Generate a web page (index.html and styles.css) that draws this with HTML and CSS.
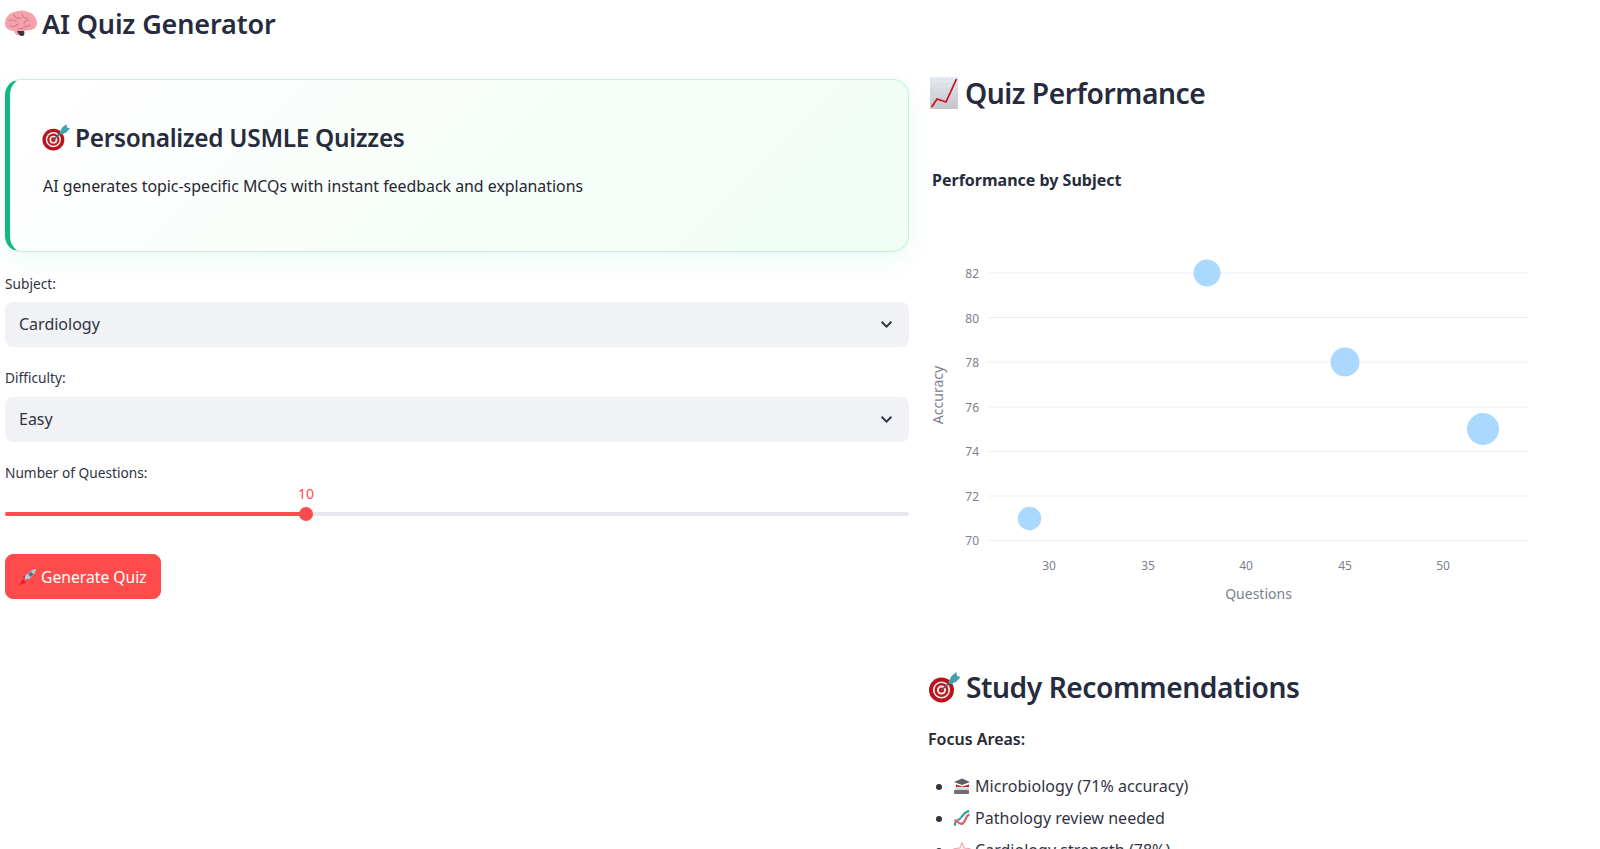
FILE: index.html
```html
<!DOCTYPE html>
<html>
<head>
    <title>AI Quiz Generator</title>
    <link rel="stylesheet" href="styles.css">
</head>
<body>
    <svg class="defs" width="0" height="0">
        <defs>
            <linearGradient id="chartBg" x1="0" y1="0" x2="0" y2="1">
                <stop offset="0" stop-color="#e6ebf3"/>
                <stop offset="1" stop-color="#c4c5ca"/>
            </linearGradient>
            <pattern id="chartDots" width="5" height="5" patternUnits="userSpaceOnUse">
                <circle cx="2" cy="2" r=".6" fill="#b9c4d4"/>
            </pattern>
            <symbol id="brain" viewBox="0 0 32 27">
                <path d="M0 14C0 8 4 3 9 2c5-2 10-2 14 0 5 1 9 6 9 11 0 4-3 7-7 7-2 0-4 1-6 1-1 3-4 5-7 4-2-1-3-3-3-4-5 0-9-3-9-7z" fill="#f4a2ac"/>
                <path d="M12 21c1 3 3 5 5 5 2 0 3-2 2-5z" fill="#3f3640"/>
                <path d="M4 11c3-2 5-1 7 0M9 5c1 3 4 4 7 3M17 4c0 3 3 5 6 4M24 10c-3 0-5 2-5 4M5 16c3 1 6 0 8-2M13 19c2 0 5-1 7-1M25 15c-1 1-3 2-5 1" fill="none" stroke="#d8778a" stroke-width="1.1" stroke-linecap="round"/>
            </symbol>
            <symbol id="target" viewBox="0 0 32 32">
                <circle cx="13" cy="19" r="12.500" fill="#b8141e"/>
                <circle cx="13" cy="19" r="8.600" fill="#f4f0f0"/>
                <circle cx="13" cy="19" r="7" fill="#c8161f"/>
                <circle cx="13" cy="19" r="4.500" fill="#f4f0f0"/>
                <circle cx="13" cy="19" r="2.600" fill="#c8161f"/>
                <path d="M13 19L24 9" stroke="#55606a" stroke-width="1.600"/>
                <path d="M20 11l3-6 5-4 .5 4 3.500 1-4 4.500-6 3z" fill="#3fa3ad"/>
            </symbol>
            <symbol id="chart" viewBox="0 0 28 32">
                <rect width="28" height="32" fill="url(#chartBg)"/>
                <rect width="28" height="32" fill="url(#chartDots)"/>
                <path d="M1.700 30L7 22l9 3L26.500 2" fill="none" stroke="#c8141c" stroke-width="1.800"/>
            </symbol>
            <symbol id="rocket" viewBox="0 0 20 20">
                <path d="M1 19l3-7 4 4z" fill="#e0202c"/>
                <path d="M5 10L15 2c2-1 4-1 4-1s0 3-2 5L9 15z" fill="#b9c6d6"/>
                <path d="M13 4l3 3-3 3-3-3z" fill="#5a6f8a"/>
                <path d="M4 10l3-2-1 4zM9 15l2-3-3 1z" fill="#c62030"/>
            </symbol>
            <symbol id="books" viewBox="0 0 18 16">
                <path d="M1 3.500l8-3.500 8 3.500-8 3z" fill="#5a5f66"/>
                <path d="M3 6l6 2 7-2v2.500H3z" fill="#c8202a"/>
                <rect x="2" y="9" width="14" height="2.500" fill="#d6d6d8"/>
                <rect x="1" y="11.500" width="15" height="4" rx="1" fill="#6b7076"/>
            </symbol>
            <symbol id="dna" viewBox="0 0 18 18">
                <path d="M1.500 16.500C1 10 5 12 8 8s4-6 8.500-7" fill="none" stroke="#2f9aa6" stroke-width="2.400"/>
                <path d="M1 11c3-1 5 6 9 3s2-8 7-9" fill="none" stroke="#d9606a" stroke-width="2.400"/>
                <path d="M5 11l2 2M8 8l2 2M11 5l2 2" stroke="#dfe6e8" stroke-width="1"/>
            </symbol>
            <symbol id="star" viewBox="0 0 20 20">
                <path d="M10 1l2.700 6 6.300.7-4.700 4.300 1.300 6.500L10 15.300 4.400 18.500l1.300-6.500L1 7.700 7.300 7z" fill="#fdeef0" stroke="#f2a5ad" stroke-width="1.300"/>
            </symbol>
        </defs>
    </svg>

    <h1 class="page-title"><svg class="icon-brain"><use href="#brain"/></svg>AI Quiz Generator</h1>

    <div class="columns">
        <div class="left-col">
            <div class="hero-card">
                <h3><svg class="icon-target-sm"><use href="#target"/></svg>Personalized USMLE Quizzes</h3>
                <p>AI generates topic-specific MCQs with instant feedback and explanations</p>
            </div>

            <div class="field-label">Subject:</div>
            <div class="select-box">
                <span>Cardiology</span>
                <svg class="chevron" viewBox="0 0 12 8"><path d="M1.500 1.500L6 6l4.500-4.500" fill="none" stroke="#31333f" stroke-width="1.800"/></svg>
            </div>

            <div class="field-label">Difficulty:</div>
            <div class="select-box">
                <span>Easy</span>
                <svg class="chevron" viewBox="0 0 12 8"><path d="M1.500 1.500L6 6l4.500-4.500" fill="none" stroke="#31333f" stroke-width="1.800"/></svg>
            </div>

            <div class="field-label">Number of Questions:</div>
            <div class="slider">
                <div class="slider-track">
                    <div class="slider-fill" style="width: 33.3%">
                        <span class="slider-value">10</span>
                        <span class="slider-thumb"></span>
                    </div>
                </div>
            </div>

            <button class="generate-btn"><svg class="icon-rocket"><use href="#rocket"/></svg>Generate Quiz</button>
        </div>

        <div class="right-col">
            <h2 class="section-title"><svg class="icon-chart"><use href="#chart"/></svg>Quiz Performance</h2>
            <div class="chart-title">Performance by Subject</div>

            <svg class="chart" viewBox="928 193 672 447">
                <g class="grid">
                    <line x1="988" x2="1528" y1="273" y2="273"/>
                    <line x1="988" x2="1528" y1="317.500" y2="317.500"/>
                    <line x1="988" x2="1528" y1="362" y2="362"/>
                    <line x1="988" x2="1528" y1="407" y2="407"/>
                    <line x1="988" x2="1528" y1="451.500" y2="451.500"/>
                    <line x1="988" x2="1528" y1="496" y2="496"/>
                    <line x1="988" x2="1528" y1="540.500" y2="540.500"/>
                </g>
                <g class="ticks y-ticks">
                    <text x="979" y="277.500">82</text>
                    <text x="979" y="322.500">80</text>
                    <text x="979" y="366.500">78</text>
                    <text x="979" y="411.500">76</text>
                    <text x="979" y="456">74</text>
                    <text x="979" y="500.500">72</text>
                    <text x="979" y="545">70</text>
                </g>
                <g class="ticks x-ticks">
                    <text x="1049" y="570">30</text>
                    <text x="1148" y="570">35</text>
                    <text x="1246" y="570">40</text>
                    <text x="1345" y="570">45</text>
                    <text x="1443" y="570">50</text>
                </g>
                <text class="axis-title" x="1258.500" y="599">Questions</text>
                <text class="axis-title" transform="translate(943 395) rotate(-90)">Accuracy</text>
                <g class="points">
                    <circle cx="1029.500" cy="518.500" r="11.700"/>
                    <circle cx="1207" cy="273" r="13.500"/>
                    <circle cx="1345" cy="362" r="14.500"/>
                    <circle cx="1483" cy="429" r="16"/>
                </g>
            </svg>

            <h2 class="section-title study"><svg class="icon-target-lg"><use href="#target"/></svg>Study Recommendations</h2>
            <div class="focus-title">Focus Areas:</div>
            <ul class="focus-list">
                <li><svg class="icon-li"><use href="#books"/></svg>Microbiology (71% accuracy)</li>
                <li><svg class="icon-li"><use href="#dna"/></svg>Pathology review needed</li>
                <li><svg class="icon-li"><use href="#star"/></svg>Cardiology strength (78%)</li>
            </ul>
        </div>
    </div>
</body>
</html>
```

FILE: styles.css
```css
html, body {
    height: 849px;
    overflow: hidden;
}

body {
    margin: 0;
    padding-left: 5px;
    font-family: "Noto Sans", sans-serif;
    font-size: 16px;
    color: #262730;
    background: #fff;
}

.defs {
    position: absolute;
}

.page-title {
    display: flex;
    align-items: center;
    margin: 0;
    height: 47px;
    font-size: 27px;
    font-weight: 600;
    letter-spacing: -0.15px;
    color: #262b3d;
}

.icon-brain {
    width: 32px;
    height: 27px;
    margin-right: 5px;
}

.columns {
    display: grid;
    grid-template-columns: 904px 1fr;
    column-gap: 19px;
    margin-top: 32px;
}

.hero-card {
    height: 173px;
    box-sizing: border-box;
    padding: 37px 32px 0;
    border: 1px solid #bbf7d0;
    border-left: 5px solid #10b981;
    border-radius: 16px;
    background: linear-gradient(135deg, #ffffff 0%, #f0fdf4 100%);
    box-shadow: 0 8px 24px rgba(16, 185, 129, 0.08);
}

.hero-card h3 {
    display: flex;
    align-items: center;
    margin: 0;
    height: 40px;
    font-size: 24.4px;
    font-weight: 600;
    letter-spacing: -0.3px;
    color: #262b3d;
}

.icon-target-sm {
    width: 28px;
    height: 28px;
    margin-right: 5px;
}

.hero-card p {
    margin: 15px 0 0 1px;
    line-height: 28px;
    font-size: 15.9px;
    letter-spacing: -0.01px;
}

.field-label {
    margin: 21px 0 9px;
    padding-top: 1px;
    line-height: 19px;
    font-size: 13.7px;
    color: #31333f;
}

.select-box + .field-label {
    margin: 20px 0 10px;
}

.select-box {
    display: flex;
    align-items: center;
    justify-content: space-between;
    height: 45px;
    padding: 0 16px 1px 14px;
    box-sizing: border-box;
    border-radius: 8px;
    background: #f0f2f6;
    font-size: 16px;
    color: #31333f;
}

.chevron {
    width: 13px;
    height: 9px;
}

.slider {
    padding-top: 20px;
}

.slider-track {
    height: 4px;
    border-radius: 2px;
    background: #e6e8ee;
}

.slider-fill {
    position: relative;
    height: 100%;
    border-radius: 2px;
    background: #ff4b4b;
}

.slider-thumb {
    position: absolute;
    right: -7px;
    top: -5px;
    width: 14px;
    height: 14px;
    border-radius: 50%;
    background: #ff4b4b;
}

.slider-value {
    position: absolute;
    right: -8px;
    top: -27px;
    font-size: 14px;
    line-height: 18px;
    color: #ff4b4b;
}

.generate-btn {
    display: flex;
    align-items: center;
    margin-top: 38px;
    height: 45px;
    padding: 0 13px;
    border: 1px solid #ff4b4b;
    border-radius: 8px;
    background: #ff4b4b;
    font-family: inherit;
    font-size: 15.7px;
    color: #fff;
}

.icon-rocket {
    width: 18px;
    height: 18px;
    margin-right: 4px;
}

.section-title {
    display: flex;
    align-items: center;
    margin: -8px 0 0;
    height: 44px;
    font-size: 28.2px;
    font-weight: 600;
    letter-spacing: -0.45px;
    color: #262b3d;
}

.icon-chart {
    width: 28px;
    height: 32px;
    margin: 0 7px 0 2px;
}

.chart-title {
    margin: 53px 0 0 4px;
    line-height: 24px;
    font-size: 16px;
    font-weight: 700;
    color: #262b3d;
}

.chart {
    display: block;
    width: 672px;
    height: 447px;
    margin-top: 1px;
}

.grid line {
    stroke: #eceef3;
    stroke-width: 1.2;
}

.ticks text {
    font-size: 12px;
    fill: #7c818c;
}

.y-ticks text {
    text-anchor: end;
}

.x-ticks text {
    text-anchor: middle;
}

.axis-title {
    font-size: 14px;
    fill: #7c818c;
    text-anchor: middle;
}

.points circle {
    fill: #abd8ff;
}

.section-title.study {
    margin-top: 25px;
}

.icon-target-lg {
    width: 33px;
    height: 32px;
    margin-right: 5px;
}

.focus-title {
    margin: 18px 0 0;
    line-height: 24px;
    font-size: 16px;
    font-weight: 600;
}

.focus-list {
    margin: 19px 0 0;
    padding-left: 26px;
}

.focus-list li {
    line-height: 32px;
    font-size: 16px;
    letter-spacing: 0.03px;
    color: #31333f;
}

.icon-li {
    width: 18px;
    height: 17px;
    margin-right: 4px;
    margin-left: -1px;
    vertical-align: -3px;
}
```
